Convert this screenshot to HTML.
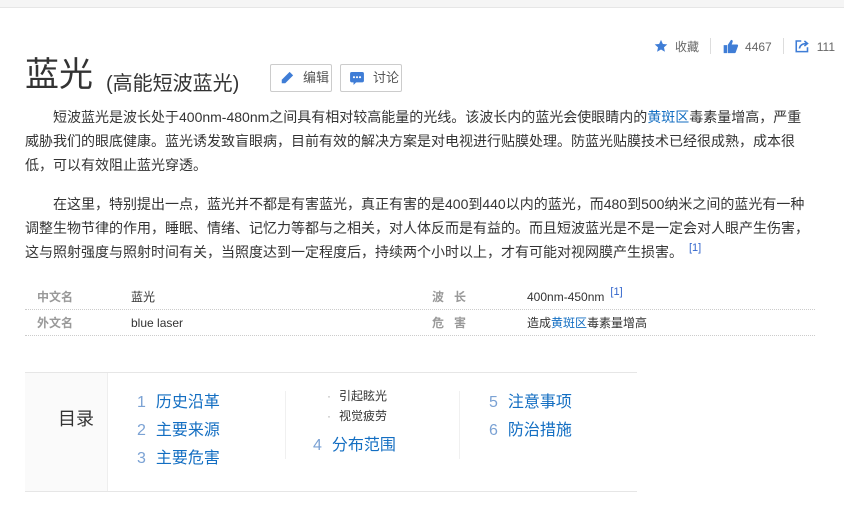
<!DOCTYPE html>
<html><head><meta charset="utf-8"><style>
*{margin:0;padding:0;box-sizing:border-box}
body{width:844px;height:506px;overflow:hidden;background:#fff;font-family:"Liberation Sans","Noto Sans CJK SC",sans-serif;color:#333;position:relative}
.top{position:absolute;left:0;top:0;width:844px;height:8px;background:#f5f5f5;border-bottom:1px solid #e6e6e6}
.abs{position:absolute;white-space:nowrap}
h1{position:absolute;left:25px;top:53px;font-size:34px;font-weight:normal;color:#333;line-height:44px}
.sub{position:absolute;left:106px;top:67px;font-size:20px;color:#333}
.btn{position:absolute;top:64px;height:28px;border:1px solid #ccc;border-radius:2px;font-size:13px;color:#555;line-height:26px;padding-left:32px}
p{position:absolute;left:25px;width:789px;font-size:14px;line-height:24px;text-indent:2em;color:#333}
a{color:#136ec2;text-decoration:none}
sup{color:#3366cc;font-size:11px;position:relative;top:-6px;vertical-align:baseline;line-height:0;margin-left:6px}
.row{position:absolute;left:25px;width:790px;height:26px;border-bottom:1px dotted #ccc;font-size:12px;line-height:26px}
.row span{position:absolute}
.lab{color:#999;font-weight:bold}
.toc{position:absolute;left:25px;top:372px;width:612px;height:120px;border-top:1px solid #e6e6e6;border-bottom:1px solid #e6e6e6}
.tl{position:absolute;left:0;top:0;width:83px;height:118px;background:#fafafa;border-right:1px solid #eee;font-size:18px;line-height:92px;text-align:center;padding-left:20px;color:#333}
.ti{position:absolute;font-size:16px;color:#136ec2;white-space:nowrap}
.ti b{font-weight:normal;color:#7ba2d4;margin-right:10px}
.ts{position:absolute;font-size:12px;color:#333;white-space:nowrap}
.ts:before{content:"·";color:#aaa;margin-right:8px}
.vl{position:absolute;top:18px;width:1px;height:68px;background:#f0f0f0}
</style></head><body>
<div class="top"></div>
<div class="abs" style="right:9px;top:38px;font-size:12px;color:#666">
<svg width="14" height="14" viewBox="0 0 24 24" style="vertical-align:-2px"><path fill="#3f7dd6" d="M12 1.5l3.2 7 7.6.8-5.7 5.1 1.6 7.5L12 18l-6.7 3.9 1.6-7.5L1.2 9.3l7.6-.8z"/></svg>
<span style="margin-left:4px">收藏</span>
<span style="display:inline-block;width:1px;height:16px;background:#ddd;margin:0 8px;vertical-align:-3px"></span>
<svg width="16" height="15" viewBox="0 0 24 22" style="vertical-align:-3px"><path fill="#3f7dd6" d="M1 9h5v12H1zM7 9l5-8c2 0 3 1 2.5 3L13 8h8c1.5 0 2 1.5 1.5 2.5L19 20c-.3.7-1 1-2 1H7z"/></svg>
<span style="margin-left:3px">4467</span>
<span style="display:inline-block;width:1px;height:16px;background:#ddd;margin:0 8px;vertical-align:-3px"></span>
<svg width="15" height="14" viewBox="0 0 24 22" style="vertical-align:-2px"><path fill="none" stroke="#3f7dd6" stroke-width="2.5" d="M10 3H2v17h18v-7"/><path fill="none" stroke="#3f7dd6" stroke-width="2.5" d="M7 15c1-6 6-8 12-8M15 3l5 4-5 4"/></svg>
<span style="margin-left:3px">111</span>
</div>
<h1>蓝光</h1>
<div class="sub">(高能短波蓝光)</div>
<div class="btn" style="left:270px;width:62px"><svg width="14" height="14" viewBox="0 0 16 16" style="position:absolute;left:9px;top:6px"><path fill="#3f7dd6" d="M11 1l4 4-9 9H2v-4z"/></svg>编辑</div>
<div class="btn" style="left:340px;width:62px"><svg width="14" height="13" viewBox="0 0 16 15" style="position:absolute;left:9px;top:7px"><rect x="0" y="0" width="16" height="12" rx="2" fill="#3f7dd6"/><path d="M4 11l0 4 4-4z" fill="#3f7dd6"/><circle cx="4.5" cy="6" r="1.2" fill="#fff"/><circle cx="8" cy="6" r="1.2" fill="#fff"/><circle cx="11.5" cy="6" r="1.2" fill="#fff"/></svg>讨论</div>
<p style="top:105px">短波蓝光是波长处于400nm-480nm之间具有相对较高能量的光线。该波长内的蓝光会使眼睛内的<a>黄斑区</a>毒素量增高，严重<br>威胁我们的眼底健康。蓝光诱发致盲眼病，目前有效的解决方案是对电视进行贴膜处理。防蓝光贴膜技术已经很成熟，成本很低，可以有效阻止蓝光穿透。</p>
<p style="top:192px">在这里，特别提出一点，蓝光并不都是有害蓝光，真正有害的是400到440以内的蓝光，而480到500纳米之间的蓝光有一种<br>调整生物节律的作用，睡眠、情绪、记忆力等都与之相关，对人体反而是有益的。而且短波蓝光是不是一定会对人眼产生伤害，<br>这与照射强度与照射时间有关，当照度达到一定程度后，持续两个小时以上，才有可能对视网膜产生损害。<sup>[1]</sup></p>
<div class="row" style="top:284px"><span class="lab" style="left:12px">中文名</span><span style="left:106px">蓝光</span><span class="lab" style="left:407px">波&nbsp;&nbsp;&nbsp;长</span><span style="left:502px">400nm-450nm<sup>[1]</sup></span></div>
<div class="row" style="top:310px"><span class="lab" style="left:12px">外文名</span><span style="left:106px">blue laser</span><span class="lab" style="left:407px">危&nbsp;&nbsp;&nbsp;害</span><span style="left:502px">造成<a>黄斑区</a>毒素量增高</span></div>
<div class="toc">
<div class="tl">目录</div>
<div class="ti" style="left:112px;top:15px"><b>1</b>历史沿革</div>
<div class="ti" style="left:112px;top:43px"><b>2</b>主要来源</div>
<div class="ti" style="left:112px;top:71px"><b>3</b>主要危害</div>
<div class="vl" style="left:260px"></div>
<div class="ts" style="left:302px;top:14px">引起眩光</div>
<div class="ts" style="left:302px;top:34px">视觉疲劳</div>
<div class="ti" style="left:288px;top:58px"><b>4</b>分布范围</div>
<div class="vl" style="left:434px"></div>
<div class="ti" style="left:464px;top:15px"><b>5</b>注意事项</div>
<div class="ti" style="left:464px;top:43px"><b>6</b>防治措施</div>
</div>
</body></html>
